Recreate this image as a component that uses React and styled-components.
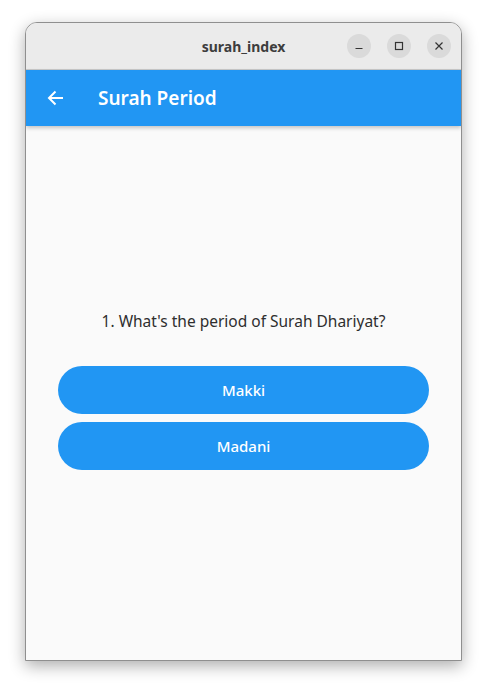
import { createGlobalStyle } from "styled-components";
import styled from "styled-components";

const GlobalStyle = createGlobalStyle`
  html, body {
    margin: 0;
    padding: 0;
    background: #ffffff;
  }
  body {
    font-family: "Noto Sans", "Open Sans", sans-serif;
  }
`;

const Page = styled.div`
  width: 487px;
  height: 689px;
  padding: 22px 0 0 25px;
  box-sizing: border-box;
`;

const Window = styled.div`
  width: 437px;
  height: 639px;
  box-sizing: border-box;
  border: 1px solid #8f8f8f;
  border-radius: 12px 12px 0 0;
  overflow: hidden;
  display: flex;
  flex-direction: column;
  background: #fafafa;
  box-shadow: 0 5px 16px rgba(0, 0, 0, 0.32);
`;

const TitleBar = styled.div`
  height: 46px;
  flex-shrink: 0;
  background: #ebebeb;
  border-bottom: 1px solid #c9c9c9;
  display: flex;
  align-items: center;
  justify-content: center;
  position: relative;
`;

const WindowTitle = styled.span`
  font-size: 14px;
  font-weight: 700;
  color: #3d3d3d;
`;

const Controls = styled.div`
  position: absolute;
  right: 10px;
  top: 11px;
  display: flex;
  gap: 16px;
`;

const CtrlButton = styled.div`
  width: 24px;
  height: 24px;
  border-radius: 50%;
  background: #dadada;
  display: flex;
  align-items: center;
  justify-content: center;
`;

const AppBar = styled.div`
  height: 56px;
  flex-shrink: 0;
  background: #2196f3;
  display: flex;
  align-items: center;
  padding-left: 20px;
  box-shadow: 0 2px 4px rgba(0, 0, 0, 0.22);
  position: relative;
  z-index: 1;
`;

const BackButton = styled.div`
  width: 18px;
  height: 18px;
  display: flex;
  align-items: center;
  justify-content: center;
  margin-right: 34px;
`;

const AppTitle = styled.h1`
  margin: 0;
  font-size: 19px;
  font-weight: 600;
  color: #ffffff;
`;

const Body = styled.div`
  flex: 1;
  display: flex;
  flex-direction: column;
  justify-content: center;
  padding: 0 32px 7px;
`;

const Question = styled.p`
  margin: 0 0 34px;
  text-align: center;
  font-size: 15.5px;
  color: #2e2e2e;
`;

const Answers = styled.div`
  display: flex;
  flex-direction: column;
  gap: 8px;
`;

const AnswerButton = styled.button`
  height: 48px;
  border: none;
  border-radius: 24px;
  background: #2196f3;
  color: #ffffff;
  font-family: inherit;
  font-size: 15px;
  font-weight: 500;
  cursor: pointer;
`;

export default function App() {
  const answers = ["Makki", "Madani"];
  return (
    <>
      <GlobalStyle />
      <Page>
        <Window>
          <TitleBar>
            <WindowTitle>surah_index</WindowTitle>
            <Controls>
              <CtrlButton>
                <svg width="10" height="10" viewBox="0 0 10 10">
                  <path d="M1.5 7.5h7" stroke="#333" strokeWidth="1.2" />
                </svg>
              </CtrlButton>
              <CtrlButton>
                <svg width="10" height="10" viewBox="0 0 10 10">
                  <rect x="1.5" y="1.5" width="7" height="7" fill="none" stroke="#333" strokeWidth="1.2" />
                </svg>
              </CtrlButton>
              <CtrlButton>
                <svg width="10" height="10" viewBox="0 0 10 10">
                  <path d="M1.5 1.5l7 7M8.5 1.5l-7 7" stroke="#333" strokeWidth="1.2" />
                </svg>
              </CtrlButton>
            </Controls>
          </TitleBar>
          <AppBar>
            <BackButton>
              <svg width="17" height="16" viewBox="0 0 17 16">
                <path d="M16 8H2M8.5 1.5L2 8l6.5 6.5" fill="none" stroke="#fff" strokeWidth="2" />
              </svg>
            </BackButton>
            <AppTitle>Surah Period</AppTitle>
          </AppBar>
          <Body>
            <Question>1. What's the period of Surah Dhariyat?</Question>
            <Answers>
              {answers.map((a) => (
                <AnswerButton key={a}>{a}</AnswerButton>
              ))}
            </Answers>
          </Body>
        </Window>
      </Page>
    </>
  );
}
